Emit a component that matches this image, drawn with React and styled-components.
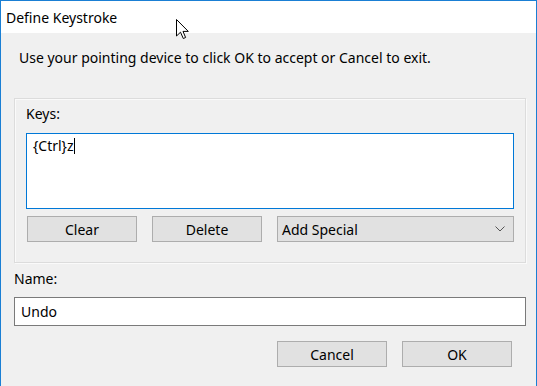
import React from 'react'
import styled, { createGlobalStyle } from 'styled-components'

const GlobalStyle = createGlobalStyle`
    html, body {
        margin: 0;
        padding: 0;
        background: #ffffff;
    }
    body {
        font-family: "Noto Sans", "Open Sans", sans-serif;
        font-size: 14px;
        color: #000;
    }
`

const Window = styled.div`
    position: relative;
    width: 537px;
    height: 386px;
    box-sizing: border-box;
    border: 1px solid #1a7fd4;
    border-bottom: none;
    display: flex;
    flex-direction: column;
    overflow: hidden;
`

const TitleBar = styled.div`
    height: 32px;
    flex: none;
    background: #ffffff;
    display: flex;
    align-items: center;
    padding: 0 0 0 5px;
    box-sizing: border-box;
`

const Body = styled.div`
    flex: 1;
    background: #f0f0f0;
    padding: 16px 10px 0 13px;
    display: flex;
    flex-direction: column;
`

const Text = styled.div`
    line-height: 18px;
    height: 18px;
    white-space: nowrap;
    margin: ${p => p.$margin || '0'};
`

const GroupBox = styled.div`
    margin-top: 31px;
    width: 512px;
    box-sizing: border-box;
    border: 1px solid #dcdcdc;
    box-shadow: inset 1px 1px 0 #fafafa, 1px 1px 0 #fafafa;
    padding: 6px 11px 20px 11px;
    display: flex;
    flex-direction: column;
`

const KeysArea = styled.div`
    margin-top: 10px;
    height: 76px;
    box-sizing: border-box;
    border: 1px solid #0078d7;
    background: #fff;
    padding: 3px 6px;
    line-height: 18px;
`

const Caret = styled.span`
    display: inline-block;
    width: 1px;
    height: 16px;
    background: #000;
    vertical-align: -3px;
`

const ButtonRow = styled.div`
    display: flex;
    gap: 15px;
    margin: ${p => p.$margin || '0'};
    justify-content: ${p => (p.$end ? 'flex-end' : 'flex-start')};
`

const Button = styled.div`
    width: 110px;
    height: 26px;
    box-sizing: border-box;
    background: #e1e1e1;
    border: 1px solid #adadad;
    display: flex;
    align-items: center;
    justify-content: center;
`

const Combo = styled.div`
    flex: 1;
    height: 26px;
    box-sizing: border-box;
    background: #e1e1e1;
    border: 1px solid #adadad;
    display: flex;
    align-items: center;
    justify-content: space-between;
    padding: 0 8px 0 4px;
`

const NameInput = styled.div`
    width: 512px;
    height: 29px;
    box-sizing: border-box;
    border: 1px solid #7a7a7a;
    background: #fff;
    display: flex;
    align-items: center;
    padding: 0 6px;
    margin-top: 9px;
`

const Cursor = styled.svg`
    position: absolute;
    left: 175px;
    top: 18px;
`

const Chevron = () => (
    <svg width="10" height="6" viewBox="0 0 10 6">
        <path d="M0.5 0.5 L5 5 L9.5 0.5" fill="none" stroke="#555" strokeWidth="1" />
    </svg>
)

export default function App() {
    return (
        <>
            <GlobalStyle />
            <Window>
                <TitleBar>Define Keystroke</TitleBar>
                <Body>
                    <Text $margin="0 0 0 5px">Use your pointing device to click OK to accept or Cancel to exit.</Text>
                    <GroupBox>
                        <Text>Keys:</Text>
                        <KeysArea>{'{Ctrl}z'}<Caret /></KeysArea>
                        <ButtonRow $margin="7px 0 0 1px">
                            <Button>Clear</Button>
                            <Button>Delete</Button>
                            <Combo>
                                <span>Add Special</span>
                                <Chevron />
                            </Combo>
                        </ButtonRow>
                    </GroupBox>
                    <Text $margin="7px 0 0 0">Name:</Text>
                    <NameInput>Undo</NameInput>
                    <ButtonRow $end $margin="15px 14px 0 0">
                        <Button>Cancel</Button>
                        <Button>OK</Button>
                    </ButtonRow>
                </Body>
                <Cursor width="14" height="22" viewBox="0 0 14 22">
                    <path d="M0.5 0.5 L0.5 17 L4.5 13.2 L7.3 19.5 L9.6 18.5 L7 12.4 L12.3 12.4 Z" fill="#fff" stroke="#000" strokeWidth="1" strokeLinejoin="miter" />
                </Cursor>
            </Window>
        </>
    )
}
